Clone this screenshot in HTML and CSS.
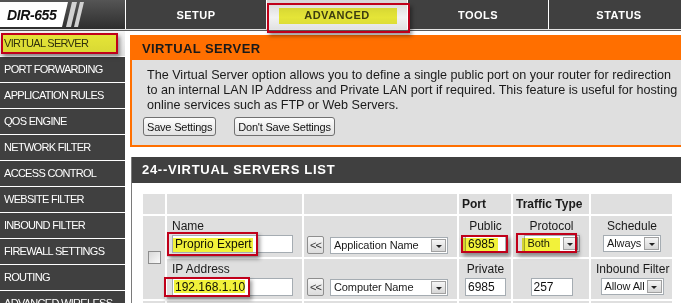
FILE: index.html
```html
<!DOCTYPE html>
<html lang="en">
<head>
  <meta charset="UTF-8">
  <title>Virtual Server</title>
  <link rel="stylesheet" href="styles.css">
</head>
<body>

<div class="topbar">
  <div class="logo">
    <svg width="125" height="29" viewBox="0 0 125 29">
      <polygon points="0,2 68,2 62,27 0,27" fill="#fff"/>
      <polygon points="72,2 77,2 71,27 66,27" fill="#d2d2d2"/>
      <polygon points="80,2 84,2 78,27 74,27" fill="#d2d2d2"/>
      <text x="7" y="20" class="logo-text">DIR-655</text>
    </svg>
  </div>
  <div class="tab">SETUP</div>
  <div class="tab active">ADVANCED</div>
  <div class="tab">TOOLS</div>
  <div class="tab">STATUS</div>
</div>
<div class="rule"></div>

<div class="main">
  <ul class="sidenav">
    <li class="current">VIRTUAL SERVER</li>
    <li>PORT FORWARDING</li>
    <li>APPLICATION RULES</li>
    <li>QOS ENGINE</li>
    <li>NETWORK FILTER</li>
    <li>ACCESS CONTROL</li>
    <li>WEBSITE FILTER</li>
    <li>INBOUND FILTER</li>
    <li>FIREWALL SETTINGS</li>
    <li>ROUTING</li>
    <li>ADVANCED WIRELESS</li>
  </ul>

  <div class="content">
    <div class="box orange">
      <h2>VIRTUAL SERVER</h2>
      <div class="box-body">
        <p>The Virtual Server option allows you to define a single public port on your router for redirection<br>
        to an internal LAN IP Address and Private LAN port if required. This feature is useful for hosting<br>
        online services such as FTP or Web Servers.</p>
        <div class="actions">
          <button class="btn">Save Settings</button>
          <button class="btn">Don't Save Settings</button>
        </div>
      </div>
    </div>

    <div class="box dark">
      <h2>24--VIRTUAL SERVERS LIST</h2>
      <div class="box-body">
        <table class="rules">
          <colgroup>
            <col class="c-check">
            <col class="c-name">
            <col class="c-app">
            <col class="c-port">
            <col class="c-type">
            <col class="c-sched">
          </colgroup>
          <tr class="head">
            <td></td>
            <td></td>
            <td></td>
            <td>Port</td>
            <td>Traffic Type</td>
            <td></td>
          </tr>
          <tr>
            <td rowspan="2" class="check-cell"><input type="checkbox" class="check"></td>
            <td class="fld">
              <div class="lbl">Name</div>
              <input class="txt txt-name" type="text" value="Proprio Expert">
            </td>
            <td class="pick-cell">
              <div class="pick-row">
                <button class="pick">&lt;&lt;</button>
                <span class="sel sel-app"><span class="val">Application Name</span><span class="arrow"></span></span>
              </div>
            </td>
            <td class="fld center">
              <div class="lbl">Public</div>
              <input class="txt txt-port" type="text" value="6985">
            </td>
            <td class="fld center">
              <div class="lbl">Protocol</div>
              <span class="sel sel-proto"><span class="val">Both</span><span class="arrow"></span></span>
            </td>
            <td class="fld center">
              <div class="lbl">Schedule</div>
              <span class="sel sel-sched"><span class="val">Always</span><span class="arrow"></span></span>
            </td>
          </tr>
          <tr class="second">
            <td class="fld">
              <div class="lbl">IP Address</div>
              <input class="txt txt-name" type="text" value="192.168.1.10">
            </td>
            <td class="pick-cell">
              <div class="pick-row">
                <button class="pick">&lt;&lt;</button>
                <span class="sel sel-app"><span class="val">Computer Name</span><span class="arrow"></span></span>
              </div>
            </td>
            <td class="fld center">
              <div class="lbl">Private</div>
              <input class="txt txt-port" type="text" value="6985">
            </td>
            <td class="fld center">
              <div class="lbl">&nbsp;</div>
              <input class="txt txt-proto" type="text" value="257">
            </td>
            <td class="fld center">
              <div class="lbl">Inbound Filter</div>
              <span class="sel sel-inbound"><span class="val">Allow All</span><span class="arrow"></span></span>
            </td>
          </tr>
          <tr class="next">
            <td></td><td></td><td></td><td></td><td></td><td></td>
          </tr>
        </table>
      </div>
    </div>
  </div>
</div>

<!-- highlighter marks drawn over the screenshot -->
<span class="mark mark-adv"></span><span class="callout callout-adv"></span>
<span class="mark mark-vs"></span><span class="callout callout-vs"></span>
<span class="mark mark-name"></span><span class="callout callout-name"></span>
<span class="mark mark-ip"></span><span class="callout callout-ip"></span>
<span class="mark mark-port"></span><span class="callout callout-port"></span>
<span class="mark mark-proto"></span><span class="callout callout-proto"></span>

</body>
</html>
```

FILE: styles.css
```css
html, body {
  margin: 0;
  overflow: hidden;
}
body {
  font-family: "Liberation Sans", Arial, sans-serif;
  font-size: 12px;
  color: #1a1a1a;
  background: #fff;
  width: 681px;
  height: 303px;
}

/* top bar */
.topbar {
  display: flex;
  height: 29px;
  background: #404040;
  border-bottom: 1px solid #e4e4e4;
}
.logo {
  width: 125px;
  flex: none;
  background: linear-gradient(#555, #2e2e2e);
}
.logo svg {
  display: block;
}
.logo-text {
  font: italic bold 14px "Liberation Sans", Arial, sans-serif;
  letter-spacing: -0.4px;
  fill: #111;
}
.tab {
  width: 141px;
  flex: none;
  box-sizing: border-box;
  height: 29px;
  padding-top: 2px;
  line-height: 27px;
  border-left: 1px solid #fff;
  color: #fff;
  font-weight: bold;
  font-size: 11px;
  letter-spacing: 0.5px;
  text-align: center;
}
.tab.active {
  background: linear-gradient(#d6d6d6, #f2f2f2 60%, #e2e2e2);
  color: #404040;
}
.rule {
  height: 1px;
  background: #5a5a5a;
}

.main {
  display: flex;
}

/* left menu */
.sidenav {
  width: 125px;
  flex: none;
  margin: 0;
  padding: 0;
  list-style: none;
  background: #404040;
}
.sidenav li {
  height: 25px;
  line-height: 25px;
  padding-left: 4px;
  border-bottom: 1px solid #fff;
  color: #fff;
  font-size: 11px;
  letter-spacing: -0.7px;
  white-space: nowrap;
}
.sidenav li.current {
  background: linear-gradient(#f4f4f4, #e2e2e2);
  color: #333;
}

/* content */
.content {
  width: 560px;
  flex: none;
  margin: 4px 0 0 5px;
}
.box {
  margin-bottom: 10px;
}
.box h2 {
  margin: 0;
  padding-left: 10px;
  font-size: 13px;
  letter-spacing: 0.4px;
}
.orange {
  border: 2px solid #ff6f00;
}
.orange h2 {
  height: 23px;
  line-height: 23px;
  background: #ff6f00;
  color: #1a1a1a;
}
.orange .box-body {
  background: #dfdfdf;
  padding: 8px 10px 9px 11px;
}
.orange p {
  margin: 0 0 4px 4px;
  font-size: 12.6px;
  line-height: 15px;
  white-space: nowrap;
}
.actions {
  display: flex;
  gap: 18px;
}
.btn {
  height: 19px;
  padding: 0 3px;
  font-family: "Liberation Sans", Arial, sans-serif;
  font-size: 11px;
  letter-spacing: -0.2px;
  color: #111;
  border: 1px solid #707070;
  border-radius: 3px;
  background: linear-gradient(#fdfdfd, #e2e2e2);
}

.dark {
  margin-left: 1px;
  border: 1px solid #7a7a7a;
  border-top: 0;
}
.dark h2 {
  height: 26px;
  line-height: 26px;
  background: #404040;
  color: #fff;
  letter-spacing: 0.7px;
}
.dark .box-body {
  background: #fff;
  padding: 9px 0 0 9px;
}

/* rules table */
.rules {
  width: 533px;
  table-layout: fixed;
  border-spacing: 2px;
}
.c-check { width: 22px; }
.c-name { width: 135px; }
.c-app { width: 153px; }
.c-port { width: 52px; }
.c-type { width: 76px; }
.c-sched { width: 81px; }

.rules td {
  background: #dfdfdf;
  padding: 0;
  vertical-align: top;
}
.head td {
  height: 20px;
  padding-left: 3px;
  vertical-align: middle;
  font-weight: bold;
  white-space: nowrap;
}
.check-cell {
  text-align: center;
  vertical-align: middle !important;
}
.check {
  appearance: none;
  display: block;
  margin: 0 auto;
  width: 13px;
  height: 13px;
  border: 1px solid #8d8d8d;
  background: linear-gradient(135deg, #d8d8d8, #fafafa);
}
.fld {
  padding: 3px 4px 4px 5px !important;
}
.second .fld {
  padding-bottom: 3px !important;
}
.center {
  text-align: center;
}
.lbl {
  height: 14px;
  line-height: 14px;
  white-space: nowrap;
}
.txt {
  display: block;
  box-sizing: border-box;
  height: 18px;
  margin-top: 2px;
  padding: 0 2px;
  border: 1px solid #a5acb2;
  font-family: "Liberation Sans", Arial, sans-serif;
  font-size: 12px;
  color: #111;
  background: #fff;
}
.txt-name { width: 121px; }
.txt-port { width: 41px; margin: 2px auto 0; }
.txt-proto { width: 42px; margin: 2px auto 0; }

.pick-cell {
  vertical-align: bottom !important;
  padding: 0 0 3px 3px !important;
}
.pick-row {
  display: flex;
  align-items: flex-end;
  gap: 6px;
}
.pick {
  width: 17px;
  height: 18px;
  padding: 0;
  border: 1px solid #8e8e8e;
  border-radius: 2px;
  background: linear-gradient(#f7f7f7, #dcdcdc);
  font-family: "Liberation Sans", Arial, sans-serif;
  font-size: 11px;
  letter-spacing: -1px;
  color: #333;
}

.sel {
  display: inline-flex;
  box-sizing: border-box;
  height: 17px;
  margin-top: 2px;
  border: 1px solid #a5acb2;
  background: #fff;
  font-size: 11px;
  letter-spacing: -0.1px;
  text-align: left;
  vertical-align: top;
}
.sel .val {
  flex: 1;
  padding-left: 3px;
  line-height: 15px;
  white-space: nowrap;
  overflow: hidden;
}
.sel .arrow {
  flex: none;
  width: 15px;
  box-sizing: border-box;
  margin: 1px;
  border: 1px solid #a0a0a0;
  background: linear-gradient(#f6f6f6, #d6d6d6);
  display: flex;
  align-items: flex-end;
  justify-content: center;
  padding-bottom: 3px;
}
.sel .arrow::after {
  content: "";
  border-top: 3px solid #222;
  border-left: 3px solid transparent;
  border-right: 3px solid transparent;
}
.sel-app { width: 118px; }
.sel-proto { width: 56px; }
.sel-sched { width: 58px; }
.sel-inbound { width: 63px; }

.next td {
  height: 40px;
}

/* highlighter marks */
.mark {
  position: absolute;
  background: #f2f23a;
  mix-blend-mode: multiply;
}
.callout {
  position: absolute;
  box-sizing: border-box;
  border: 2px solid #c0001a;
  box-shadow: 2px 3px 4px rgba(0, 0, 0, 0.4);
}
.mark-adv { left: 279px; top: 8px; width: 118px; height: 16px; }
.callout-adv { left: 267px; top: 3px; width: 143px; height: 30px; }
.mark-vs { left: 3px; top: 35px; width: 113px; height: 17px; }
.callout-vs { left: 1px; top: 33px; width: 117px; height: 21px; }
.mark-name { left: 173px; top: 238px; width: 80px; height: 14px; }
.callout-name { left: 167px; top: 232px; width: 91px; height: 24px; }
.mark-ip { left: 174px; top: 280px; width: 71px; height: 13px; }
.callout-ip { left: 164px; top: 277px; width: 86px; height: 20px; }
.mark-port { left: 463px; top: 238px; width: 35px; height: 13px; }
.callout-port { left: 461px; top: 235px; width: 47px; height: 18px; }
.mark-proto { left: 522px; top: 238px; width: 38px; height: 13px; }
.callout-proto { left: 516px; top: 233px; width: 61px; height: 20px; }
```
